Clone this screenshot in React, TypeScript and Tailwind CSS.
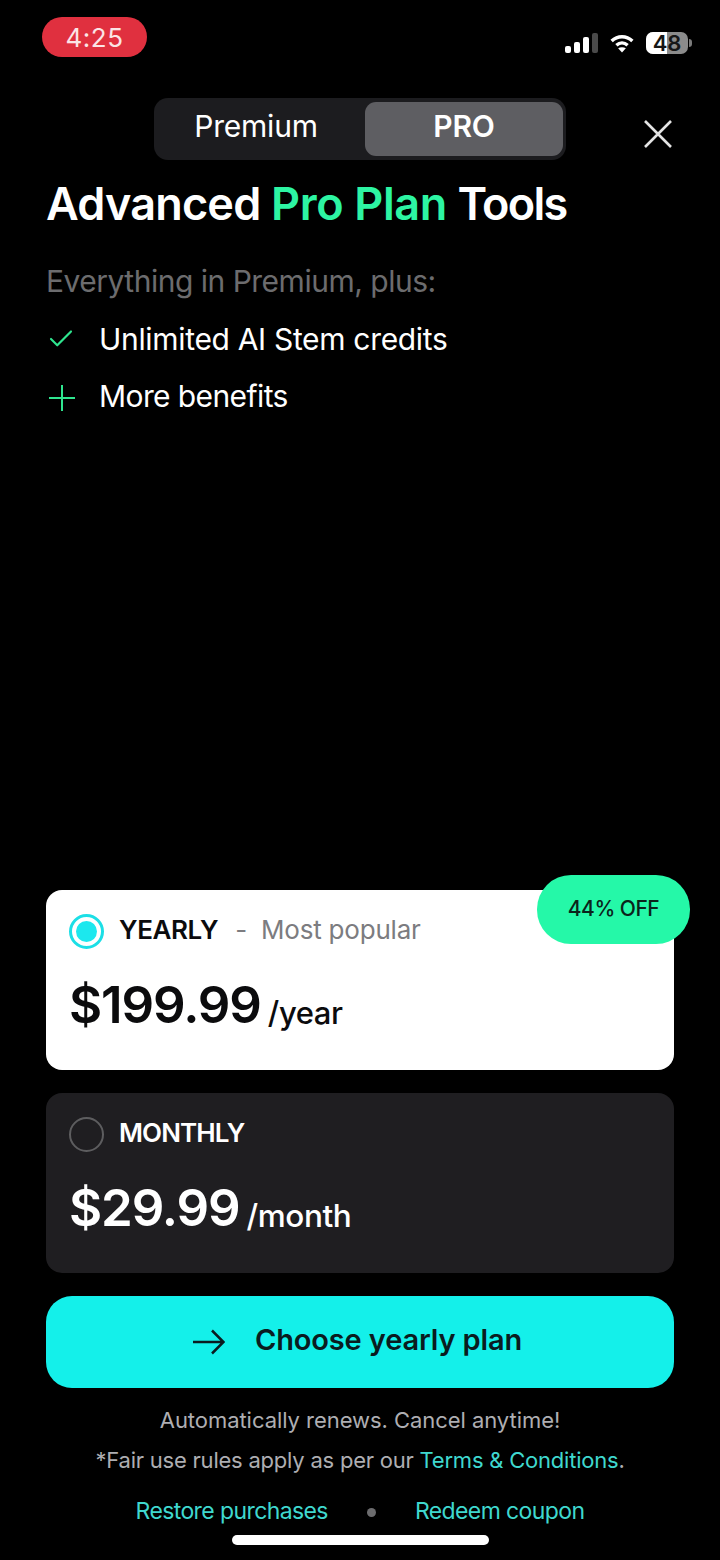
import { Check } from "lucide-react";

const font = { fontFamily: "Inter, 'Noto Sans', sans-serif" };

function SignalBars() {
  return (
    <svg width="33" height="20" viewBox="0 0 33 20">
      <rect x="0" y="13" width="6" height="7" rx="2" fill="#fff" />
      <rect x="9" y="9" width="6" height="11" rx="2" fill="#fff" />
      <rect x="18" y="4" width="6" height="16" rx="2" fill="#fff" />
      <rect x="27" y="0" width="6" height="20" rx="2" fill="#4a4a4a" />
    </svg>
  );
}

function Wifi() {
  return (
    <svg width="28" height="19" viewBox="0 0 28 22" fill="none" stroke="#fff" strokeWidth="4">
      <path d="M2 8 C9 1.5 19 1.5 26 8" />
      <path d="M7.5 13 C11.5 9.5 16.5 9.5 20.5 13" />
      <path d="M14 21.5 L9.5 16.5 C12 14.8 16 14.8 18.5 16.5 Z" fill="#fff" stroke="none" />
    </svg>
  );
}

function Battery() {
  return (
    <div className="flex items-center gap-[1px]">
      <div className="relative w-[42px] h-[22px] rounded-[7px] bg-[#8b8b8b]">
        <div className="absolute inset-y-0 left-0 w-[21px] rounded-l-[7px] bg-white" />
        <div className="relative h-full flex items-center justify-center text-[22px] leading-none font-semibold text-[#161616]">
          48
        </div>
      </div>
      <div className="w-[3px] h-[8px] rounded-r-full bg-[#7a7a7a]" />
    </div>
  );
}

function PlanCard({
  selected,
  label,
  note,
  price,
  period,
}: {
  selected?: boolean;
  label: string;
  note?: string;
  price: string;
  period: string;
}) {
  return (
    <div
      className={`h-[180px] rounded-[16px] pl-[23px] pr-6 pt-[24px] ${
        selected ? "bg-white text-[#0b0b0d]" : "bg-[#1f1e21] text-white"
      }`}
    >
      <div className="flex items-center h-[35px]">
        {selected ? (
          <div className="w-[35px] h-[35px] rounded-full border-[3px] border-[#1cdfe6] flex items-center justify-center">
            <div className="w-[21px] h-[21px] rounded-full bg-[#1ce8ee]" />
          </div>
        ) : (
          <div className="w-[35px] h-[35px] rounded-full border-2 border-[#5d5d5f]" />
        )}
        <span
          className={`ml-[15px] text-[26px] font-semibold leading-none ${
            selected ? "tracking-[-0.4px] -mt-[3px]" : "tracking-[-0.9px] -mt-[4px]"
          }`}
        >
          {label}
        </span>
        {note && (
          <span className="text-[26px] leading-none text-[#7c7c80] tracking-[-0.2px] -mt-[3px]">
            <span className="ml-[17px] mr-[14px]">-</span>
            {note}
          </span>
        )}
      </div>
      <div className="flex items-baseline mt-[25px]">
        <span className="text-[51px] leading-[62px] font-semibold tracking-[-1.1px]">{price}</span>
        <span
          className={`ml-[7px] font-medium tracking-[-0.4px] translate-y-[1px] ${
            selected ? "text-[31px]" : "text-[31.5px]"
          }`}
        >
          {period}
        </span>
      </div>
    </div>
  );
}

export default function App() {
  return (
    <div className="w-[720px] h-[1560px] bg-black text-white flex flex-col overflow-hidden" style={font}>
      {/* status bar */}
      <div className="h-[98px] pl-[42px] pr-[28px] pt-[17px] flex justify-between items-start">
        <div className="w-[105px] h-[40px] rounded-[20px] bg-[#e0303f] flex items-center justify-center text-[26px] text-[#fbe4e6] tracking-[0.5px]">
          4:25
        </div>
        <div className="flex items-center gap-[10px] pt-[15px]">
          <SignalBars />
          <Wifi />
          <Battery />
        </div>
      </div>

      {/* plan switcher */}
      <div className="flex items-center pl-[154px] pr-[48px]">
        <div className="w-[412px] h-[62px] rounded-[14px] bg-[#1c1c1f] flex items-center px-[3px]">
          <div className="w-[198px] mr-[10px] pb-[5px] text-center text-[30px] tracking-[-0.2px]">Premium</div>
          <div className="w-[198px] h-[54px] pb-[5px] rounded-[11px] bg-[#5e5e62] flex items-center justify-center text-[30px] font-semibold tracking-[-0.2px]">
            PRO
          </div>
        </div>
        <svg className="ml-auto mt-[9px]" width="28" height="28" viewBox="0 0 28 28" stroke="#e4e4e4" strokeWidth="2.6">
          <path d="M1 1 L27 27 M27 1 L1 27" />
        </svg>
      </div>

      {/* heading */}
      <div className="px-[46px] flex-1">
        <h1 className="mt-[15px] text-[45px] leading-[58px] font-semibold tracking-[-0.8px] whitespace-nowrap">
          Advanced <span className="text-[#2df5a3] tracking-[-0.35px]">Pro Plan</span>{" "}
          <span className="tracking-[-1.7px]">Tools</span>
        </h1>
        <p className="mt-[28px] text-[30px] leading-[40px] text-[#6c6c6e] tracking-[-0.5px]">
          Everything in Premium, plus:
        </p>
        <ul className="mt-[18px] flex flex-col gap-[17px] text-[30px] leading-[40px]">
          <li className="flex items-center tracking-[-0.32px]">
            <Check size={30} strokeWidth={1.7} color="#2fe58f" />
            <span className="ml-[23px]">Unlimited AI Stem credits</span>
          </li>
          <li className="flex items-center tracking-[-0.6px]">
            <svg className="ml-[3px] mt-[3px]" width="26" height="26" viewBox="0 0 26 26" stroke="#2fe58f" strokeWidth="2">
              <path d="M0 13 H26 M13 0 V26" />
            </svg>
            <span className="ml-[24px]">More benefits</span>
          </li>
        </ul>
      </div>

      {/* plans */}
      <div className="px-[46px] flex flex-col gap-[23px] relative">
        <PlanCard selected label="YEARLY" note="Most popular" price="$199.99" period="/year" />
        <div className="absolute -top-[15px] right-[30px] w-[153px] h-[69px] rounded-[34px] bg-[#25f8a8] flex items-center justify-center pb-[2px] text-[21px] font-medium tracking-[-0.5px] text-[#0b241b]">
          44% OFF
        </div>
        <PlanCard label="MONTHLY" price="$29.99" period="/month" />
      </div>

      {/* cta */}
      <div className="px-[46px] mt-[23px]">
        <div className="h-[92px] rounded-[26px] pb-[4px] bg-[#14f0ea] flex items-center justify-center text-[#0a1c20]">
          <svg className="-ml-[5px] mt-[4px]" width="32" height="26" viewBox="0 0 32 26" fill="none" stroke="currentColor" strokeWidth="2.5">
            <path d="M0 13 H30 M19 1.5 L30.5 13 L19 24.5" />
          </svg>
          <span className="ml-[30px] text-[29px] font-semibold tracking-[-0.15px]">Choose yearly plan</span>
        </div>
      </div>

      {/* footer */}
      <div className="mt-[16px] text-center text-[22px] leading-[32px] text-[#aeaeb2]">
        <p className="tracking-[-0.05px]">Automatically renews. Cancel anytime!</p>
        <p className="mt-[8px] tracking-[-0.22px]">
          *Fair use rules apply as per our <span className="text-[#3fd8cf]">Terms &amp; Conditions</span>.
        </p>
      </div>
      <div className="mt-[19px] flex items-center justify-center text-[23px] leading-[32px] text-[#3fd8cf] tracking-[-0.6px]">
        <span>Restore purchases</span>
        <span className="w-[9px] h-[9px] rounded-full bg-[#6c6c6e] mx-[39px] mt-[3px]" />
        <span>Redeem coupon</span>
      </div>
      <div className="mt-[8px] mb-[15px] mx-auto w-[257px] h-[10px] rounded-full bg-white" />
    </div>
  );
}
